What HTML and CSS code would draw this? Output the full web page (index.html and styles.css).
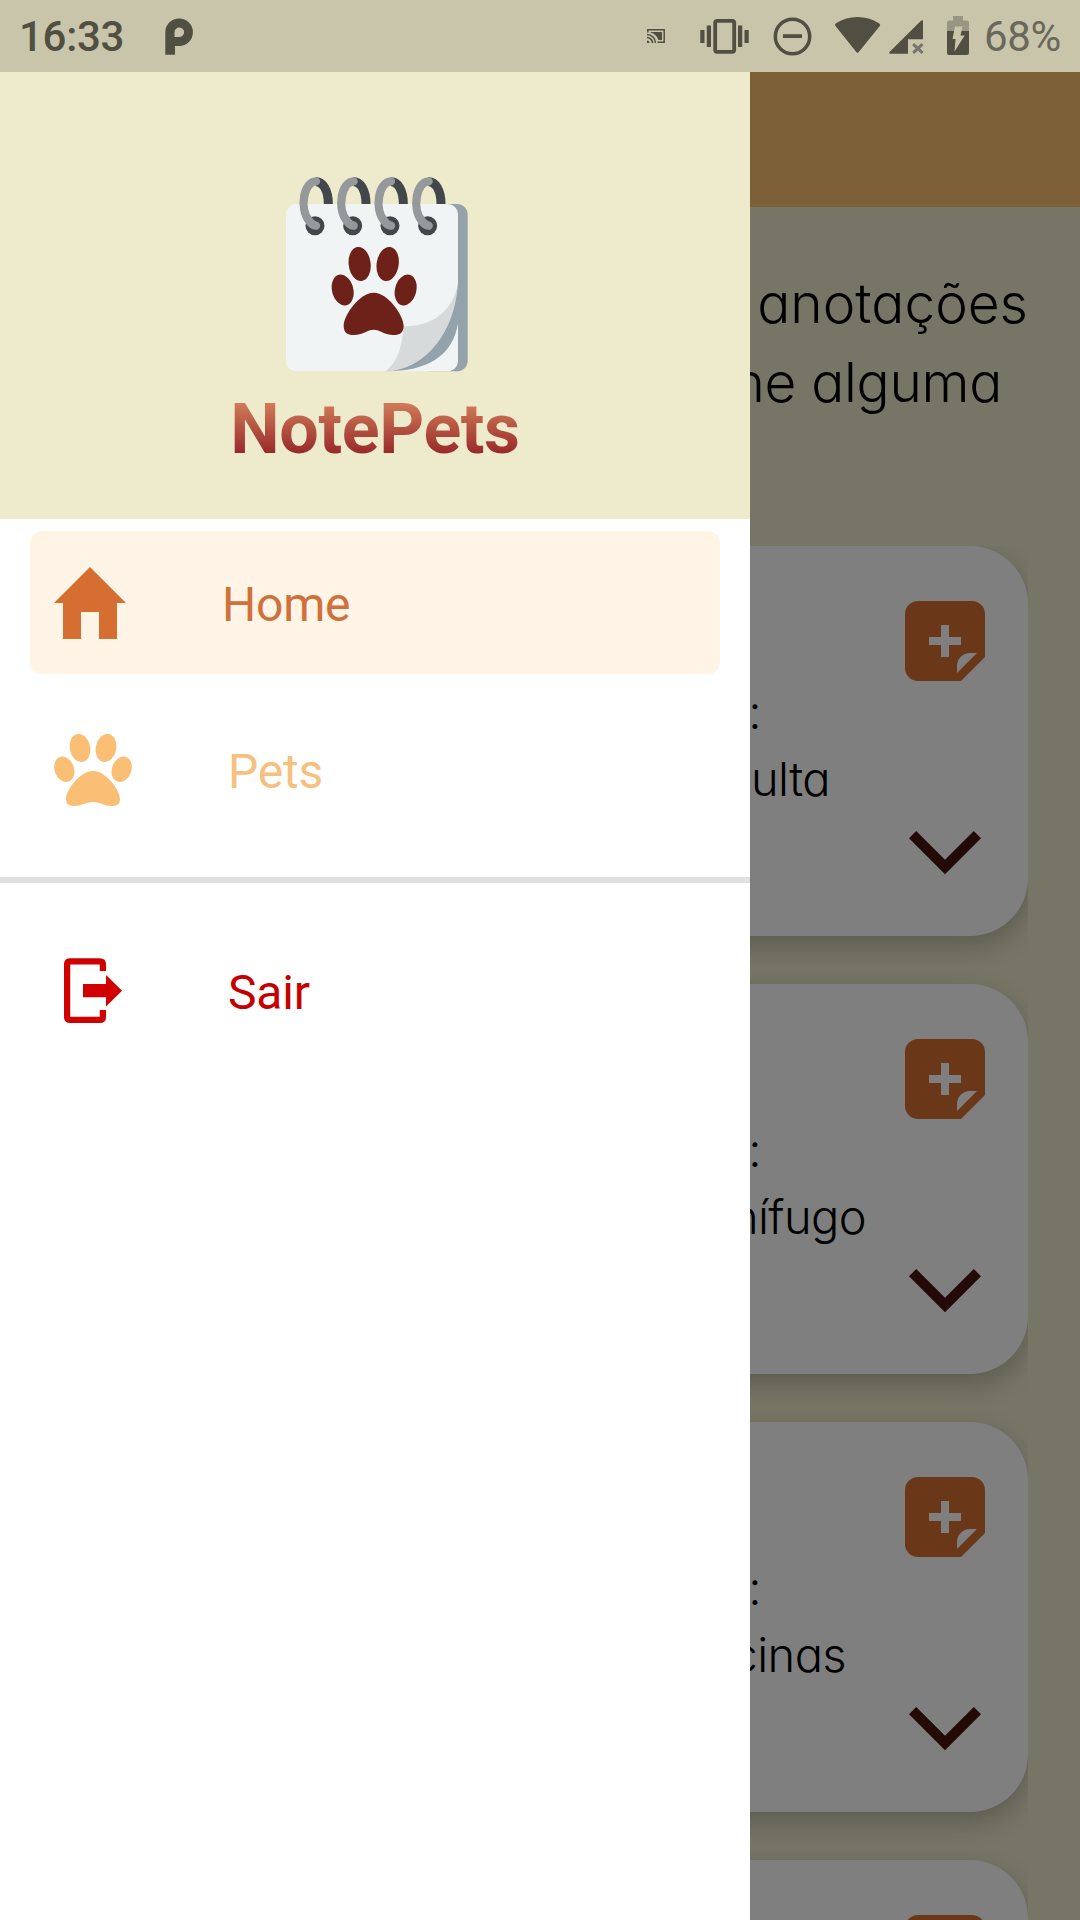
FILE: index.html
```html
<!DOCTYPE html>
<html lang="pt-BR">
<head>
<meta charset="utf-8">
<title>NotePets</title>
<link rel="stylesheet" href="styles.css">
</head>
<body>
<svg width="0" height="0" class="defs" aria-hidden="true">
  <symbol id="note-add" viewBox="0 0 80 80">
    <path fill-rule="evenodd" d="M13 0H67a13 13 0 0 1 13 13V56L56 80H13A13 13 0 0 1 0 67V13A13 13 0 0 1 13 0zM36 24V36H24v8H36V56h8V44H56V36H44V24zM72 52H65a13 13 0 0 0-13 13v7z"/>
  </symbol>
  <symbol id="chevron" viewBox="0 0 72 44">
    <path d="M7.2 0 36 28.7 64.8 0 72 7.2 36 43.2 0 7.2z"/>
  </symbol>
</svg>

<header class="status">
  <span class="time">16:33</span>
  <svg class="p-icon" width="30" height="72" viewBox="158 0 30 72"><path fill-rule="evenodd" d="M159.300 54.700V32a13.800 13.800 0 1 1 13.800 14H169v8.700zM168.500 37H173a4.800 4.800 0 1 0-4.500-5z"/></svg>
  <div class="status-icons">
    <svg width="40" height="72" viewBox="640 0 40 72"><path fill="none" stroke="#504f42" stroke-width="1.500" d="M647.800 32.500V29.700H664.200V42.300H657.500M647 34.500a8.500 8.500 0 0 1 8.500 8.500M647 37.500a5.500 5.500 0 0 1 5.500 5.500"/><path d="M650.500 32H662V40H658.500A12 12 0 0 0 650.500 32.500zM647 40.500a2.500 2.500 0 0 1 2.500 2.500H647z"/></svg>
    <svg width="80" height="72" viewBox="680 0 80 72"><rect x="715.200" y="20.800" width="19" height="31" rx="2" fill="none" stroke="#504f42" stroke-width="3.800"/><path d="M706.800 25.500h4.200v21.500h-4.200zM700.300 30h4.200v13h-4.200zM738 25.500h4.200v21.500H738zM744.500 30h4.200v13h-4.200z"/></svg>
    <svg width="66" height="72" viewBox="760 0 66 72"><circle cx="792.500" cy="36.500" r="17.200" fill="none" stroke="#504f42" stroke-width="3.500"/><path d="M783 34.200h19v3.800h-19z"/></svg>
    <svg width="58" height="72" viewBox="826 0 58 72"><path d="M835.500 26Q834.200 24.500 836 23.300C849 15 866 15 879 23.300Q881 24.500 879.800 26L858.500 52.200Q857.500 53.500 856.500 52.200z"/></svg>
    <svg width="54" height="72" viewBox="884 0 54 72"><path d="M890 51.500 921 20.700Q923 19.500 923 21.500V39.300H908V53.800H890.500Q888 53.500 890 51.500z"/><path class="soft" d="M913.200 44.200 922.500 52.800M922.500 44.200 913.200 52.800"/></svg>
    <svg width="42" height="72" viewBox="938 0 42 72"><path fill="#989682" d="M953 16h10v4.500h4q2 0 2 2V31.500H947V22.500q0-2 2-2h4z"/><path d="M947 31H969V53q0 2-2 2H949q-2 0-2-2z"/><path fill="#c8c5ab" d="M955 26.500h7.500l-2 9h4.200L954.500 51.500l1-12.500H952.500z"/></svg>
  </div>
  <span class="battery-label">68%</span>
</header>

<main class="home">
  <div class="appbar"></div>
  <div class="intro">
    <p class="intro-line intro-first">anotações</p>
    <p class="intro-line intro-second">ne alguma</p>
  </div>
  <section class="notes">
    <article class="note consulta">
      <div class="note-text"><p class="colon">:</p><p class="kind">ulta</p></div>
      <div class="actions"><svg class="add"><use href="#note-add"/></svg><svg class="expand"><use href="#chevron"/></svg></div>
    </article>
    <article class="note vermifugo">
      <div class="note-text"><p class="colon">:</p><p class="kind">nífugo</p></div>
      <div class="actions"><svg class="add"><use href="#note-add"/></svg><svg class="expand"><use href="#chevron"/></svg></div>
    </article>
    <article class="note vacinas">
      <div class="note-text"><p class="colon">:</p><p class="kind">cinas</p></div>
      <div class="actions"><svg class="add"><use href="#note-add"/></svg><svg class="expand"><use href="#chevron"/></svg></div>
    </article>
    <article class="note">
      <div class="note-text"></div>
      <div class="actions"><svg class="add"><use href="#note-add"/></svg></div>
    </article>
  </section>
</main>
<div class="scrim"></div>

<aside class="drawer">
  <div class="brand">
    <svg class="logo" width="182" height="198" viewBox="198 42 546 594">
      <rect x="600" y="132" width="143" height="502" rx="32" fill="#94a2ab"/>
      <rect x="198" y="132" width="516" height="502" rx="32" fill="#f0f4f5"/>
      <path fill="#94a2ab" d="M714 370V490C698 590 620 634 500 634 620 620 695 530 714 370z"/>
      <path fill="#d6dadb" d="M713 375C700 440 650 500 550 499 548 560 530 612 495 635 620 630 706 510 713 375z"/>
      <g id="rings">
        <g id="ring">
          <circle cx="285" cy="197" r="28.500" fill="#41474b"/>
          <path fill="none" stroke="#41474b" stroke-width="27" d="M287 65C308 64 325 90 325 132"/>
          <path fill="none" stroke="#96999c" stroke-width="25" stroke-linecap="round" d="M288 64C252 64 236 145 268 183 274 193 280 196 288 197"/>
        </g>
        <use href="#ring" x="113"/><use href="#ring" x="225"/><use href="#ring" x="338"/>
      </g>
      <g fill="#6d2119">
        <ellipse cx="419" cy="312" rx="33" ry="51.500" transform="rotate(-7 419 312)"/>
        <ellipse cx="503" cy="312" rx="33" ry="51.500" transform="rotate(9 503 312)"/>
        <ellipse cx="368" cy="390" rx="32" ry="47" transform="rotate(-14 368 390)"/>
        <ellipse cx="557" cy="390" rx="32" ry="47" transform="rotate(14 557 390)"/>
        <path d="M461 398C505 398 551 468 551 497 551 517 540 525 520 525 495 525 480 509 461 509 442 509 427 525 402 525 382 525 371 517 371 497 371 468 417 398 461 398z"/>
      </g>
    </svg>
    <h1 class="name">NotePets</h1>
  </div>
  <nav class="menu">
    <a class="item active"><svg width="72" height="72" viewBox="0 0 72 72"><path d="M36 0 72 36H63V72H45V45H27V72H9V36H0z"/></svg><span>Home</span></a>
    <a class="item pets"><svg width="78" height="72" viewBox="54 734 78 72"><ellipse cx="64.300" cy="769.300" rx="9.700" ry="13" transform="rotate(-19 64.300 769.300)"/><ellipse cx="80" cy="748" rx="10.200" ry="14.200" transform="rotate(-11 80 748)"/><ellipse cx="106" cy="748" rx="10.200" ry="14.200" transform="rotate(11 106 748)"/><ellipse cx="121.700" cy="769.300" rx="9.700" ry="13" transform="rotate(19 121.700 769.300)"/><path d="M93 771C106 771 120 790 120 799 120 804 117 806 112 806 104 806 100 802 93 802 86 802 81 806 74 806 69 806 66 804 66 799 66 790 80 771 93 771z"/></svg><span>Pets</span></a>
    <hr class="divider">
    <a class="item exit"><svg width="58" height="66" viewBox="64 958 58 66"><path fill="none" stroke="#d10000" stroke-width="6.300" d="M102.900 971V964.500Q102.900 961.300 99.700 961.300H70.300Q67.100 961.300 67.100 964.500V1016.700Q67.100 1019.900 70.300 1019.900H99.700Q102.900 1019.900 102.900 1016.700V1010"/><path d="M83 984H106V975L122 990.700 106 1006.500V997.200H83z"/></svg><span>Sair</span></a>
  </nav>
</aside>
</body>
</html>
```
FILE: styles.css
```css
* { box-sizing: border-box; }

body {
  position: relative;
  width: 1080px;
  height: 1920px;
  margin: 0;
  overflow: hidden;
  display: flex;
  flex-direction: column;
  background: #eeeacc;
  font-family: Roboto, sans-serif;
}

p, h1 { margin: 0; }
svg { display: block; flex: none; }
.defs { position: absolute; }

/* Status bar */
.status {
  flex: none;
  display: flex;
  align-items: center;
  height: 72px;
  padding-left: 19px;
  background: #c8c5ab;
  color: #504f42;
  fill: #504f42;
  font-size: 42px;
  font-weight: 500;
  line-height: 72px;
  letter-spacing: -.3px;
}
.time { width: 145px; padding-top: 2px; }
.status-icons { display: flex; margin-left: 446px; }
.soft { fill: none; stroke: #77766a; stroke-width: 3; }
.battery-label { padding: 2px 0 0 4px; color: #69685a; font-weight: 450; }

/* Notes screen */
.home { flex: 1; min-height: 0; display: flex; flex-direction: column; color: #000; font-family: Inter, sans-serif; font-weight: 340; font-feature-settings: "cv11" 1; }
.appbar { flex: none; height: 135px; background: #fabe70; }
.intro { flex: none; height: 339px; padding-top: 57px; text-align: right; }
.intro-line { font-size: 55px; line-height: 79px; white-space: nowrap; }
.intro-first { padding-right: 52px; }
.intro-second { padding-right: 78px; letter-spacing: -.3px; }

.notes {
  flex: 1;
  min-height: 0;
  margin: 0 52px;
  display: flex;
  flex-direction: column;
  gap: 48px;
  overflow: hidden;
}
.note {
  flex: none;
  display: flex;
  justify-content: space-between;
  height: 390px;
  padding: 55px 43px 0 0;
  border-radius: 58px;
  background: #fff;
  box-shadow: 0 10px 26px rgba(0, 0, 0, .22);
}
.note-text { padding-top: 77px; text-align: right; font-size: 47px; line-height: 67px; letter-spacing: -.6px; }
.consulta .note-text { width: 778px; }
.vermifugo .note-text { width: 814px; }
.vacinas .note-text { width: 794px; }
.consulta .colon { padding-right: 69px; }
.vermifugo .colon { padding-right: 105px; }
.vacinas .colon { padding-right: 85px; }
.actions { display: flex; flex-direction: column; align-items: center; gap: 150px; }
.add { width: 80px; height: 80px; fill: #d66e32; }
.expand { width: 72px; height: 44px; fill: #48140e; }

.scrim { position: absolute; inset: 72px 0 0; background: rgba(0, 0, 0, .5); }

/* Navigation drawer */
.drawer { position: absolute; top: 72px; bottom: 0; left: 0; width: 750px; background: #fff; }
.brand {
  display: flex;
  flex-direction: column;
  align-items: center;
  height: 447px;
  padding-top: 102px;
  background: #eeeacc;
}
.logo { margin-left: 4px; }
.name {
  margin-top: 16px;
  background: linear-gradient(#cf7a57 16px, #98282a 66px);
  background-clip: text;
  color: transparent;
  font-size: 70px;
  font-weight: 700;
  line-height: 82px;
  letter-spacing: -.4px;
}
.menu { padding-top: 12px; }
.item { display: flex; align-items: center; height: 143px; margin: 0 30px; padding-left: 24px; font-size: 48px; line-height: 60px; letter-spacing: -.2px; }
.item span { padding-top: 4px; }
.active { gap: 96px; border-radius: 12px; background: #fff4e5; color: #d0703a; fill: #d66e32; }
.pets { gap: 96px; margin-top: 24px; color: #f6c17f; fill: #fabf74; }
.divider { height: 6px; margin: 36px 0 0; border: 0; background: #e0e0e0; }
.exit { gap: 106px; margin-top: 36px; padding-left: 34px; color: #c60000; fill: #d10000; }
```
